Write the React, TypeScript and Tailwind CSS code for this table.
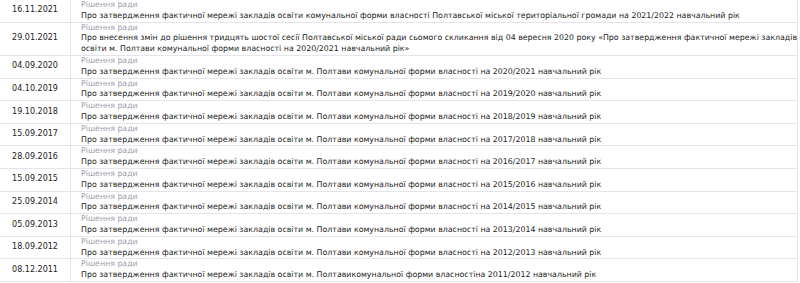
import React from 'react';

interface Row {
  date: string;
  title: React.ReactNode;
}

const rows: Row[] = [
  { date: '16.11.2021', title: 'Про затвердження фактичної мережі закладів освіти комунальної форми власності Полтавської міської територіальної громади на 2021/2022 навчальний рік' },
  {
    date: '29.01.2021',
    title: (
      <>
        Про внесення змін до рішення тридцять шостої сесії Полтавської міської ради сьомого скликання від 04 вересня 2020 року «Про затвердження фактичної мережі закладів
        <br />
        освіти м. Полтави комунальної форми власності на 2020/2021 навчальний рік»
      </>
    ),
  },
  { date: '04.09.2020', title: 'Про затвердження фактичної мережі закладів освіти м. Полтави комунальної форми власності на 2020/2021 навчальний рік' },
  { date: '04.10.2019', title: 'Про затвердження фактичної мережі закладів освіти м. Полтави комунальної форми власності на 2019/2020 навчальний рік' },
  { date: '19.10.2018', title: 'Про затвердження фактичної мережі закладів освіти м. Полтави комунальної форми власності на 2018/2019 навчальний рік' },
  { date: '15.09.2017', title: 'Про затвердження фактичної мережі закладів освіти м. Полтави комунальної форми власності на 2017/2018 навчальний рік' },
  { date: '28.09.2016', title: 'Про затвердження фактичної мережі закладів освіти м. Полтави комунальної форми власності на 2016/2017 навчальний рік' },
  { date: '15.09.2015', title: 'Про затвердження фактичної мережі закладів освіти м. Полтави комунальної форми власності на 2015/2016 навчальний рік' },
  { date: '25.09.2014', title: 'Про затвердження фактичної мережі закладів освіти м. Полтави комунальної форми власності на 2014/2015 навчальний рік' },
  { date: '05.09.2013', title: 'Про затвердження фактичної мережі закладів освіти м. Полтави комунальної форми власності на 2013/2014 навчальний рік' },
  { date: '18.09.2012', title: 'Про затвердження фактичної мережі закладів освіти м. Полтави комунальної форми власності на 2012/2013 навчальний рік' },
  { date: '08.12.2011', title: 'Про затвердження фактичної мережі закладів освіти м. Полтавикомунальної форми власностіна 2011/2012 навчальний рік' },
];

export default function App() {
  return (
    <div className="w-[800px] bg-white font-['DejaVu_Sans',sans-serif] text-[7.85px] leading-[10.8px] text-[#222]">
      <div className="w-[798px] border-r border-[#e4e4ea]">
        {rows.map((r) => (
          <div key={r.date} className="flex border-b border-[#e4e4ea]">
            <div className="w-[71px] shrink-0 flex items-center justify-center border-r border-[#e4e4ea] text-[8px]">
              {r.date}
            </div>
            <div className="flex-1 pl-[10px] pr-[10px] whitespace-nowrap">
              <div className="text-[#9c9cac]">Рішення ради</div>
              <div>{r.title}</div>
            </div>
          </div>
        ))}
      </div>
    </div>
  );
}
